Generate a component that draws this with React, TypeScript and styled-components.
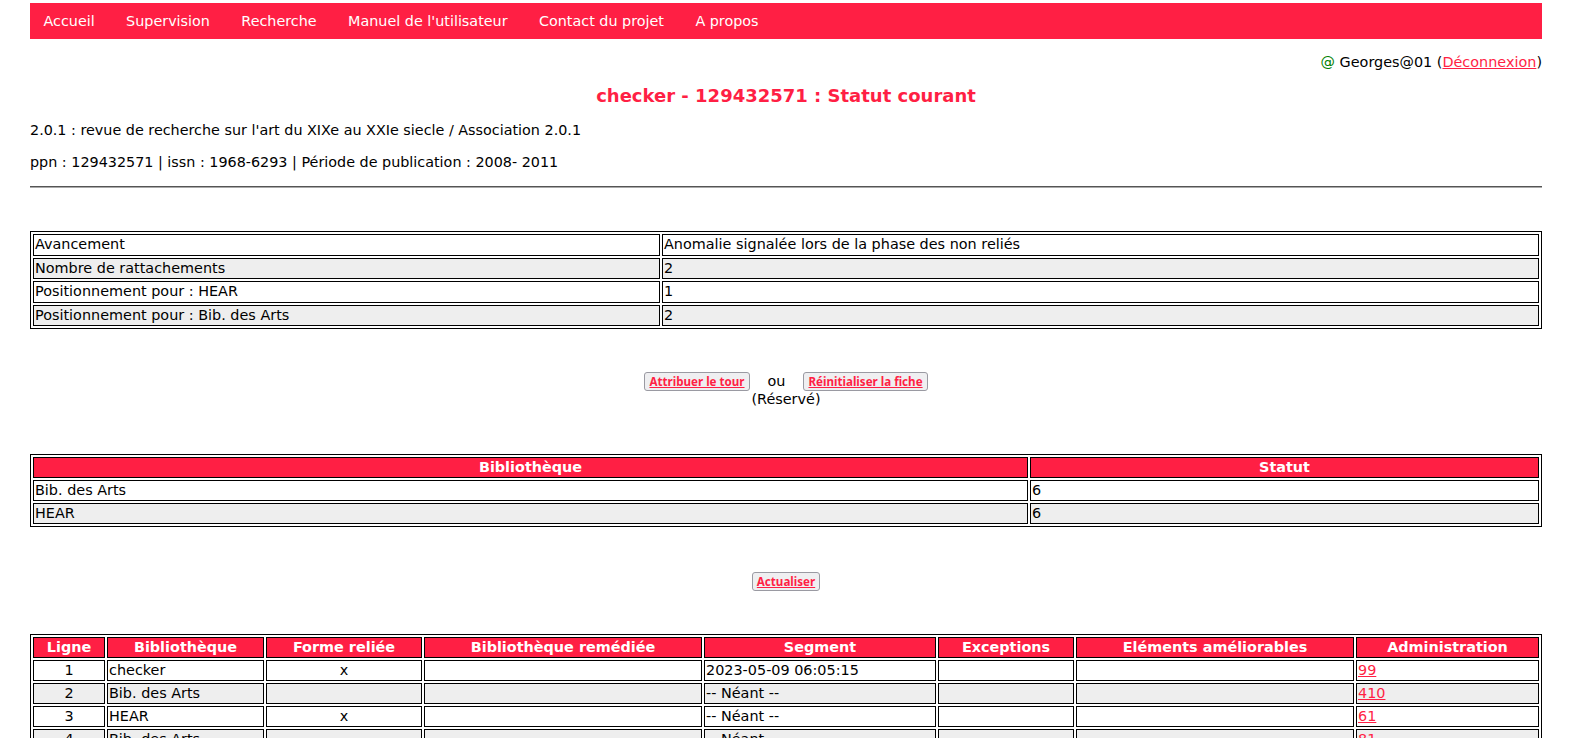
import React from "react";
import styled, { createGlobalStyle } from "styled-components";

const RED = "#ff1f44";

const GlobalStyle = createGlobalStyle`
  html { scrollbar-width: none; }
  html::-webkit-scrollbar, body::-webkit-scrollbar { display: none; }
  body {
    margin: 0;
    background: #fff;
    color: #000;
    font-family: "DejaVu Sans", Verdana, sans-serif;
    font-size: 14.4px;
  }
`;

const Page = styled.div`
  width: 1512px;
  margin: 0 0 0 30px;
  padding-top: 3px;
  padding-bottom: 40px;
`;

const Nav = styled.nav`
  display: flex;
  align-items: center;
  gap: 31.4px;
  height: 36px;
  padding-left: 13.5px;
  background: ${RED};
`;

const NavLink = styled.a`
  color: #fff;
  text-decoration: none;
  font-size: 14.35px;
`;

const UserLine = styled.div`
  margin-top: 15px;
  text-align: right;
  line-height: 17px;
`;

const At = styled.span`
  color: #008000;
`;

const Link = styled.a`
  color: ${RED};
  text-decoration: underline;
`;

const Title = styled.h3`
  margin: 14px 0 0;
  text-align: center;
  color: ${RED};
  font-size: 18px;
  font-weight: bold;
  line-height: 21px;
`;

const Info = styled.p`
  margin: 16px 0 0;
  line-height: 17px;
  font-size: 14.35px;
  & + & {
    margin-top: 15px;
  }
`;

const Rule = styled.hr`
  margin: 15px 0 0;
  border: 0;
  border-top: 1px solid #555;
  border-bottom: 1px solid #aaa;
  height: 0;
`;

const Table = styled.table<{ $top: number; $line?: number }>`
  width: 1512px;
  margin-top: ${(p) => p.$top}px;
  border: 1px solid #000;
  border-collapse: separate;
  border-spacing: 2px;
  table-layout: fixed;
  font-size: 14.4px;
  & td,
  & th {
    line-height: ${(p) => p.$line ?? 17}px;
  }
`;

const Row = styled.tr<{ $alt?: boolean }>`
  background: ${(p) => (p.$alt ? "#eeeeee" : "#ffffff")};
`;

const Cell = styled.td<{ $center?: boolean }>`
  box-sizing: border-box;
  border: 1px solid #000;
  padding: 1px 1px;
  text-align: ${(p) => (p.$center ? "center" : "left")};
  white-space: nowrap;
  overflow: hidden;
`;

const Head = styled.th`
  box-sizing: border-box;
  border: 1px solid #000;
  padding: 1px 1px;
  background: ${RED};
  color: #fff;
  font-weight: bold;
  text-align: center;
  white-space: nowrap;
  overflow: hidden;
`;

const Actions = styled.div<{ $top: number }>`
  margin-top: ${(p) => p.$top}px;
  display: flex;
  flex-direction: column;
  align-items: center;
`;

const ButtonRow = styled.div`
  display: flex;
  align-items: center;
  gap: 18px;
  line-height: 19px;
`;

const Button = styled.button`
  box-sizing: border-box;
  height: 19px;
  padding: 0 4px;
  border: 1px solid #9a9aa2;
  border-radius: 3px;
  background: #efeff1;
  font-family: "Noto Sans", "Open Sans", sans-serif;
  font-size: 11.6px;
  font-weight: bold;
  line-height: 15px;
  color: ${RED};
  text-decoration: underline;
  cursor: pointer;
`;

const Note = styled.div`
  line-height: 17px;
`;

const infoRows = [
  ["Avancement", "Anomalie signalée lors de la phase des non reliés"],
  ["Nombre de rattachements", "2"],
  ["Positionnement pour : HEAR", "1"],
  ["Positionnement pour : Bib. des Arts", "2"],
];

const statusRows = [
  ["Bib. des Arts", "6"],
  ["HEAR", "6"],
];

const lineCols = [72, 157, 156, 278, 232, 136, 278, 183];
const lineHeads = [
  "Ligne",
  "Bibliothèque",
  "Forme reliée",
  "Bibliothèque remédiée",
  "Segment",
  "Exceptions",
  "Eléments améliorables",
  "Administration",
];
const lines = [
  { n: 1, lib: "checker", forme: "x", seg: "2023-05-09 06:05:15", admin: "99" },
  { n: 2, lib: "Bib. des Arts", forme: "", seg: "-- Néant --", admin: "410" },
  { n: 3, lib: "HEAR", forme: "x", seg: "-- Néant --", admin: "61" },
  { n: 4, lib: "Bib. des Arts", forme: "", seg: "-- Néant --", admin: "81" },
  { n: 5, lib: "HEAR", forme: "x", seg: "-- Néant --", admin: "57" },
];

export default function App() {
  return (
    <>
      <GlobalStyle />
      <Page>
        <Nav>
          <NavLink href="#">Accueil</NavLink>
          <NavLink href="#">Supervision</NavLink>
          <NavLink href="#">Recherche</NavLink>
          <NavLink href="#">Manuel de l'utilisateur</NavLink>
          <NavLink href="#">Contact du projet</NavLink>
          <NavLink href="#">A propos</NavLink>
        </Nav>
        <UserLine>
          <At>@</At> Georges@01 (<Link href="#">Déconnexion</Link>)
        </UserLine>
        <Title>checker - 129432571 : Statut courant</Title>
        <Info>2.0.1 : revue de recherche sur l'art du XIXe au XXIe siecle / Association 2.0.1</Info>
        <Info>ppn : 129432571 | issn : 1968-6293 | Période de publication : 2008- 2011</Info>
        <Rule />

        <Table $top={43} $line={17.5}>
          <colgroup>
            <col style={{ width: 627 }} />
            <col style={{ width: 877 }} />
          </colgroup>
          <tbody>
            {infoRows.map((r, i) => (
              <Row key={r[0]} $alt={i % 2 === 1}>
                <Cell>{r[0]}</Cell>
                <Cell>{r[1]}</Cell>
              </Row>
            ))}
          </tbody>
        </Table>

        <Actions $top={43}>
          <ButtonRow>
            <Button>Attribuer le tour</Button>
            <span>ou</span>
            <Button>Réinitialiser la fiche</Button>
          </ButtonRow>
          <Note>(Réservé)</Note>
        </Actions>

        <Table $top={46}>
          <colgroup>
            <col style={{ width: 995 }} />
            <col style={{ width: 509 }} />
          </colgroup>
          <thead>
            <tr>
              <Head>Bibliothèque</Head>
              <Head>Statut</Head>
            </tr>
          </thead>
          <tbody>
            {statusRows.map((r, i) => (
              <Row key={r[0]} $alt={i % 2 === 1}>
                <Cell>{r[0]}</Cell>
                <Cell>{r[1]}</Cell>
              </Row>
            ))}
          </tbody>
        </Table>

        <Actions $top={45}>
          <Button>Actualiser</Button>
        </Actions>

        <Table $top={43}>
          <colgroup>
            {lineCols.map((w, i) => (
              <col key={i} style={{ width: w }} />
            ))}
          </colgroup>
          <thead>
            <tr>
              {lineHeads.map((h) => (
                <Head key={h}>{h}</Head>
              ))}
            </tr>
          </thead>
          <tbody>
            {lines.map((l, i) => (
              <Row key={l.n} $alt={i % 2 === 1}>
                <Cell $center>{l.n}</Cell>
                <Cell>{l.lib}</Cell>
                <Cell $center>{l.forme}</Cell>
                <Cell></Cell>
                <Cell>{l.seg}</Cell>
                <Cell></Cell>
                <Cell></Cell>
                <Cell>
                  <Link href="#">{l.admin}</Link>
                </Cell>
              </Row>
            ))}
          </tbody>
        </Table>
      </Page>
    </>
  );
}
